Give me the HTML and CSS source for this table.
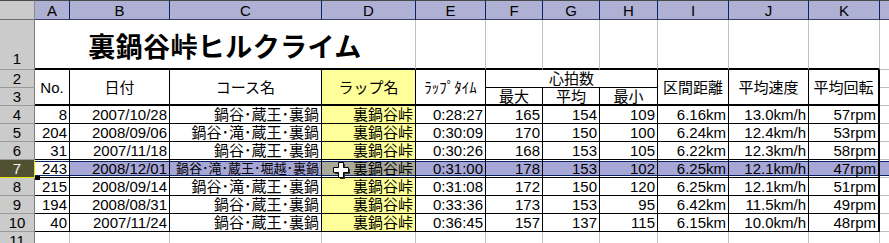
FILE: index.html
```html
<!DOCTYPE html>
<html lang="ja">
<head>
<meta charset="utf-8">
<title>裏鍋谷峠ヒルクライム</title>
<link rel="stylesheet" href="styles.css">
</head>
<body>
<div class="sheet">
  <div class="corner"></div>
  <div class="ch">A</div><div class="ch">B</div><div class="ch">C</div><div class="ch">D</div><div class="ch">E</div><div class="ch">F</div><div class="ch">G</div><div class="ch">H</div><div class="ch">I</div><div class="ch">J</div><div class="ch">K</div><div class="ch last"></div>

  <div class="rh bot">1</div>
  <div class="title">裏鍋谷峠ヒルクライム</div>
  <div class="g k"></div><div class="g k"></div><div class="g k"></div><div class="g k"></div><div class="g k"></div><div class="g k"></div><div class="g k"></div>
  <div class="g last"></div>

  <div class="rh">2</div>
  <div class="h">No.</div>
  <div class="h">日付</div>
  <div class="h">コース名</div>
  <div class="h yl">ラップ名</div>
  <div class="h">ﾗｯﾌﾟﾀｲﾑ</div>
  <div class="h top">心拍数</div>
  <div class="h">区間距離</div>
  <div class="h">平均速度</div>
  <div class="h kend">平均回転</div>
  <div class="g last"></div>

  <div class="rh">3</div>
  <div class="h sub">最大</div><div class="h sub">平均</div><div class="h sub">最小</div>
  <div class="g last"></div>

  <div class="rh">4</div>
  <div class="t">8</div><div class="t">2007/10/28</div><div class="t">鍋谷･蔵王･裏鍋</div><div class="t yl">裏鍋谷峠</div><div class="t">0:28:27</div><div class="t">165</div><div class="t">154</div><div class="t">109</div><div class="t">6.16km</div><div class="t">13.0km/h</div><div class="t kend">57rpm</div><div class="g last"></div>

  <div class="rh">5</div>
  <div class="t">204</div><div class="t">2008/09/06</div><div class="t">鍋谷･滝･蔵王･裏鍋</div><div class="t yl">裏鍋谷峠</div><div class="t">0:30:09</div><div class="t">170</div><div class="t">150</div><div class="t">100</div><div class="t">6.24km</div><div class="t">12.4km/h</div><div class="t kend">53rpm</div><div class="g last"></div>

  <div class="rh">6</div>
  <div class="t">31</div><div class="t">2007/11/18</div><div class="t">鍋谷･蔵王･裏鍋</div><div class="t yl">裏鍋谷峠</div><div class="t">0:30:26</div><div class="t">168</div><div class="t">153</div><div class="t">105</div><div class="t">6.22km</div><div class="t">12.3km/h</div><div class="t kend">58rpm</div><div class="g last"></div>

  <div class="rh on">7</div>
  <div class="t sel act">243</div><div class="t sel">2008/12/01</div><div class="t sel small">鍋谷･滝･蔵王･堀越･裏鍋</div><div class="t sel ysel">裏鍋谷峠</div><div class="t sel">0:31:00</div><div class="t sel">178</div><div class="t sel">153</div><div class="t sel">102</div><div class="t sel">6.25km</div><div class="t sel">12.1km/h</div><div class="t sel kend">47rpm</div><div class="g sel last"></div>

  <div class="rh">8</div>
  <div class="t">215</div><div class="t">2008/09/14</div><div class="t">鍋谷･滝･蔵王･裏鍋</div><div class="t yl">裏鍋谷峠</div><div class="t">0:31:08</div><div class="t">172</div><div class="t">150</div><div class="t">120</div><div class="t">6.25km</div><div class="t">12.1km/h</div><div class="t kend">51rpm</div><div class="g last"></div>

  <div class="rh">9</div>
  <div class="t">194</div><div class="t">2008/08/31</div><div class="t">鍋谷･蔵王･裏鍋</div><div class="t yl">裏鍋谷峠</div><div class="t">0:33:36</div><div class="t">173</div><div class="t">153</div><div class="t">95</div><div class="t">6.42km</div><div class="t">11.5km/h</div><div class="t kend">49rpm</div><div class="g last"></div>

  <div class="rh">10</div>
  <div class="t">40</div><div class="t">2007/11/24</div><div class="t">鍋谷･蔵王･裏鍋</div><div class="t yl">裏鍋谷峠</div><div class="t">0:36:45</div><div class="t">157</div><div class="t">137</div><div class="t">115</div><div class="t">6.15km</div><div class="t">10.0km/h</div><div class="t kend">48rpm</div><div class="g last"></div>

  <div class="rh">11</div>
  <div class="g"></div><div class="g"></div><div class="g"></div><div class="g"></div><div class="g"></div><div class="g"></div><div class="g"></div><div class="g"></div><div class="g"></div><div class="g"></div><div class="g"></div><div class="g last"></div>

  <div class="handle"></div>
  <svg class="cursor" width="17" height="17" viewBox="0 0 17 17">
    <polygon points="7,2 12,2 12,7 17,7 17,12 12,12 12,17 7,17 7,12 2,12 2,7 7,7" fill="#333"/>
    <polygon points="5.5,0.5 10.5,0.5 10.5,5.5 15.5,5.5 15.5,10.5 10.5,10.5 10.5,15.5 5.5,15.5 5.5,10.5 0.5,10.5 0.5,5.5 5.5,5.5" fill="#fff" stroke="#000" stroke-width="1"/>
  </svg>
</div>
</body>
</html>
```

FILE: styles.css
```css
html, body {
  margin: 0;
  padding: 0;
  background: #fff;
  overflow: hidden;
}

.sheet {
  position: relative;
  display: grid;
  grid-template-columns: 35px 35px 100px 152px 94px 70px 57px 57px 58px 71px 80px 71px 9px;
  grid-template-rows: 20px 50px 18px 18px repeat(7, 18px) 18px;
  width: 889px;
  height: 243px;
  overflow: hidden;
  font-family: "Liberation Sans", "Noto Sans CJK JP", sans-serif;
  font-size: 15px;
  color: #000;
}

.sheet > div {
  box-sizing: border-box;
  line-height: 17px;
  white-space: nowrap;
  overflow: hidden;
}

.corner {
  background: #cbcbcb;
  border-top: 1px solid #4a4a4a;
  border-right: 1px solid #8a8a8a;
  border-bottom: 1px solid #6f6f6f;
}

.ch {
  background: #aeb0d4;
  border-top: 1px solid #4a4a4a;
  border-right: 1px solid #0a246a;
  border-bottom: 1px solid #3a3f70;
  display: flex;
  align-items: center;
  justify-content: center;
}

.ch.last {
  border-right: none;
}

.rh {
  background: #cbcbcb;
  border-right: 1px solid #808080;
  border-bottom: 1px solid #9a9a9a;
  display: flex;
  align-items: center;
  justify-content: center;
}

.rh.bot {
  align-items: flex-end;
  padding-bottom: 2px;
}

.rh.on {
  background: #505033;
  color: #f4f4f4;
  border-bottom-color: #e6e600;
  border-right-color: #e6e600;
}

.g {
  border-right: 1px solid #c0c0c0;
  border-bottom: 1px solid #c0c0c0;
}

.g.k {
  border-bottom: 2px solid #000;
}

.last {
  border-right: none;
}

.title {
  grid-column: span 4;
  border-right: 1px solid #c0c0c0;
  border-bottom: 2px solid #000;
  display: flex;
  align-items: center;
  justify-content: center;
  font-family: "Noto Sans CJK JP", sans-serif;
  font-size: 27px;
  font-weight: bold;
  letter-spacing: 0.4px;
  padding-top: 3px;
}

.h {
  grid-row: span 2;
  border-right: 1px solid #000;
  border-bottom: 2px solid #000;
  display: flex;
  align-items: center;
  justify-content: center;
}

.h.top {
  grid-row: span 1;
  grid-column: span 3;
  border-bottom: 1px solid #000;
  align-items: flex-end;
}

.h.sub {
  grid-row: span 1;
}

.t {
  border-right: 1px solid #000;
  border-bottom: 1px solid #000;
  text-align: right;
  padding-right: 2px;
}

.yl {
  background: #ffff99;
}

.kend {
  border-right: 2px solid #000;
}

.sel {
  background: #a7a7d7;
  box-shadow: inset 0 1px #fff, inset 0 2px #0a246a, inset 0 -1px #fff, inset 0 -2px #0a246a;
}

.sel.act {
  background: #fff;
}

.sel.ysel {
  background: #a9a99a;
}

.sel.small {
  font-size: 13px;
}

.handle {
  position: absolute;
  left: 35px;
  top: 176px;
  width: 5px;
  height: 5px;
  background: #000;
  box-shadow: inset 0 -2px 0 -1px #fff;
}

.cursor {
  position: absolute;
  left: 333px;
  top: 162px;
}
```
